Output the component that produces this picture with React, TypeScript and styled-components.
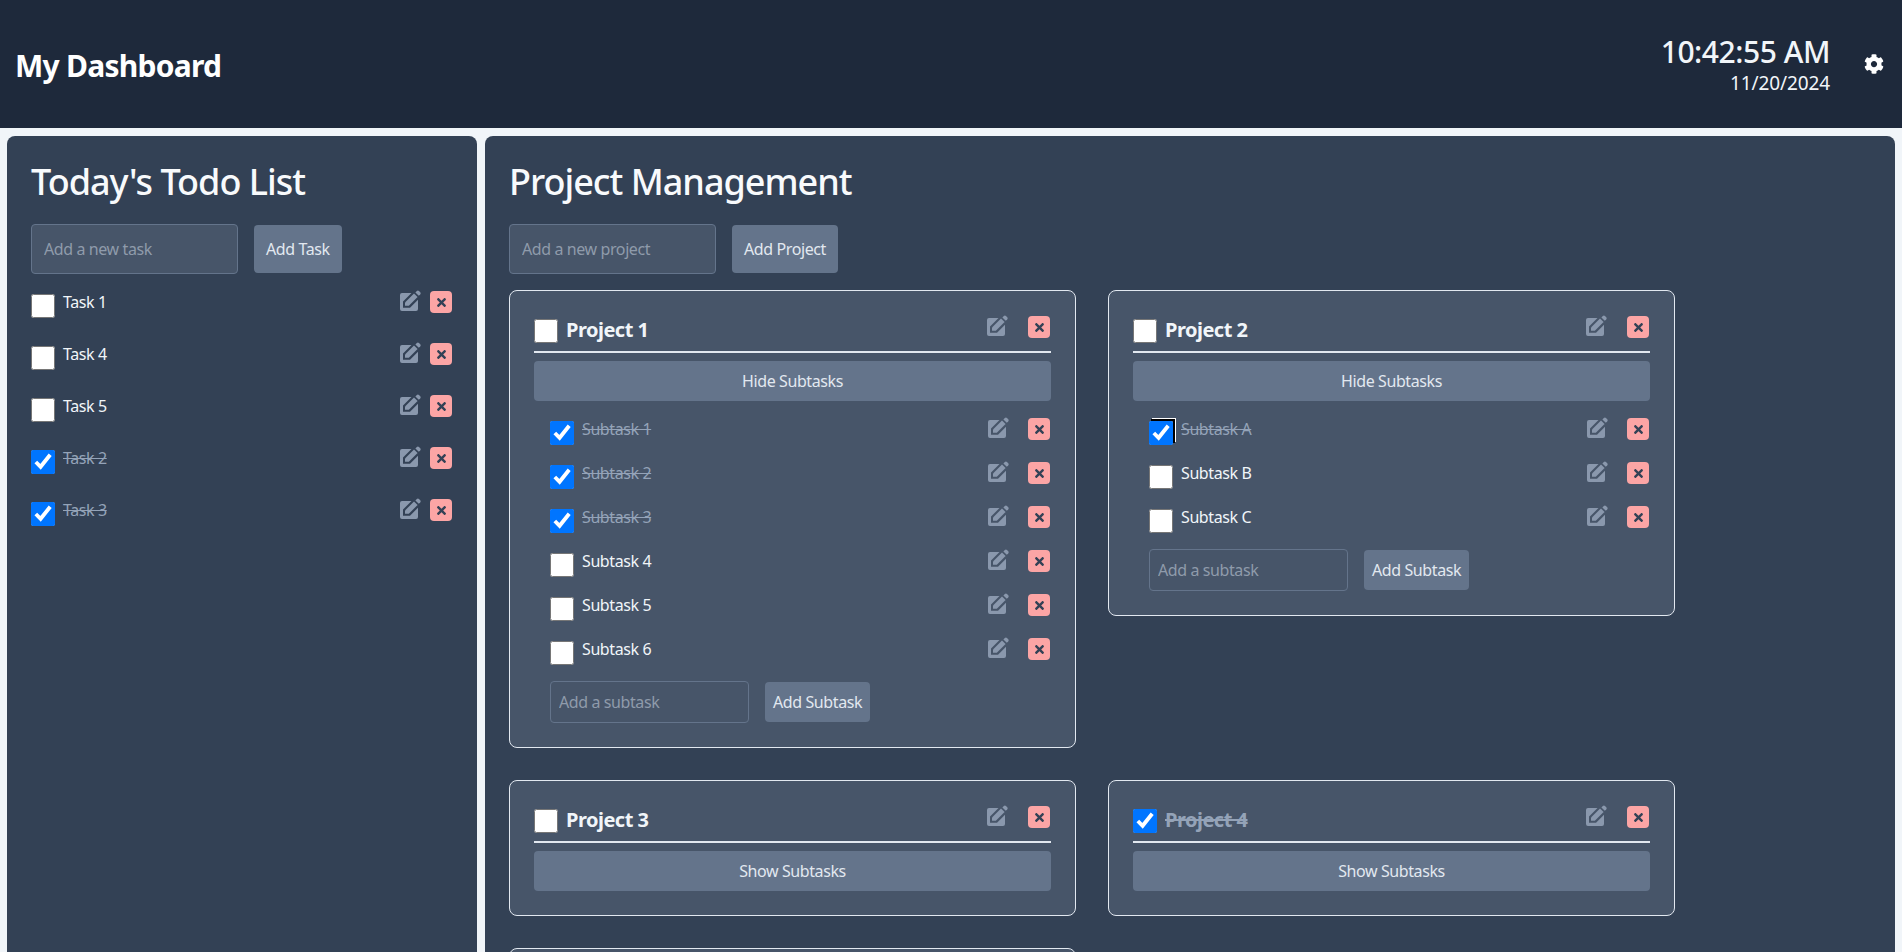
import { createGlobalStyle } from "styled-components";
import styled from "styled-components";
import { FaCog, FaTimes } from "react-icons/fa";

const GlobalStyle = createGlobalStyle`
  html, body {
    margin: 0;
    padding: 0;
    height: 100%;
    overflow: hidden;
    background: #f1f5f9;
    font-family: "Noto Sans", "Open Sans", sans-serif;
    color: #f1f5f9;
  }
  * { box-sizing: border-box; }
`;

const Header = styled.header`
  height: 128px;
  background: #1e293b;
  display: flex;
  align-items: center;
  justify-content: space-between;
  padding: 0 18px 0 15px;
`;

const Brand = styled.h1`
  margin: 2px 0 0;
  font-size: 30px;
  font-weight: 700;
  letter-spacing: -0.75px;
  color: #fff;
`;

const HeaderRight = styled.div`
  display: flex;
  align-items: center;
  gap: 34px;
`;

const Clock = styled.div`
  text-align: right;
  padding-top: 2px;
`;

const Time = styled.div`
  font-size: 30px;
  line-height: 36px;
  font-weight: 500;
  letter-spacing: -0.45px;
`;

const DateText = styled.div`
  font-size: 19px;
  line-height: 26px;
  letter-spacing: -0.1px;
`;

const Gear = styled(FaCog)`
  display: block;
  width: 20px;
  height: 20px;
  color: #fff;
`;

const Main = styled.main`
  display: grid;
  grid-template-columns: 470px 1fr;
  gap: 8px;
  padding: 8px 7px 0;
`;

const Panel = styled.section`
  background: #334155;
  border-radius: 8px;
  padding: 24px;
  min-height: 816px;
`;

const Title = styled.h2`
  margin: 0 0 22px;
  padding-top: 2px;
  font-size: 36px;
  line-height: 40px;
  font-weight: 500;
  letter-spacing: -1px;
  color: #f8fafc;
`;

const AddForm = styled.div`
  display: flex;
  align-items: center;
  gap: 16px;
  margin-bottom: 16px;
`;

const Input = styled.input<{ $sub?: boolean }>`
  width: ${(p) => (p.$sub ? "199px" : "207px")};
  height: ${(p) => (p.$sub ? "42px" : "50px")};
  padding: 0 ${(p) => (p.$sub ? "8px" : "12px")};
  background: #475569;
  border: 1px solid #64748b;
  border-radius: 4px;
  font: inherit;
  font-size: 16px;
  letter-spacing: -0.4px;
  color: #f1f5f9;

  &::placeholder {
    color: #8f9bab;
  }
`;

const Button = styled.button<{ $sub?: boolean }>`
  height: ${(p) => (p.$sub ? "40px" : "48px")};
  padding: 0 ${(p) => (p.$sub ? "8px" : "12px")};
  background: #64748b;
  border: 0;
  border-radius: 4px;
  font: inherit;
  font-size: 16px;
  letter-spacing: -0.4px;
  color: #e2e8f0;
`;

const Row = styled.div<{ $sub?: boolean }>`
  display: flex;
  align-items: flex-start;
  justify-content: space-between;
  height: ${(p) => (p.$sub ? "44px" : "52px")};
`;

const RowMain = styled.label`
  display: flex;
  align-items: flex-start;
  gap: 8px;
`;

const Check = styled.input.attrs({ type: "checkbox" })<{ $focused?: boolean }>`
  width: 24px;
  height: 24px;
  margin: 4px 0 0;
  accent-color: #0075ff;
  ${(p) => (p.$focused ? "box-shadow: 2px -2px 0 #000, 3px -3px 0 #fff;" : "")}
`;

const ItemText = styled.span<{ $done?: boolean }>`
  font-size: 16px;
  line-height: 24px;
  letter-spacing: -0.4px;
  color: ${(p) => (p.$done ? "#94a3b8" : "#f1f5f9")};
  text-decoration: ${(p) => (p.$done ? "line-through" : "none")};
`;

const Actions = styled.div<{ $gap: number }>`
  display: flex;
  align-items: flex-start;
  gap: ${(p) => p.$gap}px;
  padding-right: 1px;
`;

const EditSvg = styled.svg`
  display: block;
  width: 21px;
  height: 21px;
  color: #8a98ad;
`;

const DeleteButton = styled.button`
  width: 22px;
  height: 22px;
  margin-top: 1px;
  padding: 0;
  display: flex;
  align-items: center;
  justify-content: center;
  background: #fca5a5;
  border: 0;
  border-radius: 4px;
  color: #334155;
`;

const CardGrid = styled.div`
  display: grid;
  grid-template-columns: repeat(2, 567px);
  gap: 32px;
  align-items: start;
`;

const Card = styled.article`
  background: #475569;
  border: 1px solid #e2e8f0;
  border-radius: 8px;
  padding: 24px;
`;

const CardHeader = styled.div`
  display: flex;
  align-items: flex-start;
  justify-content: space-between;
  height: 38px;
  border-bottom: 2px solid #e2e8f0;
  margin-bottom: 8px;
`;

const ProjectName = styled.span<{ $done?: boolean }>`
  padding-top: 1px;
  font-size: 20px;
  line-height: 28px;
  font-weight: 700;
  letter-spacing: -0.5px;
  color: ${(p) => (p.$done ? "#94a3b8" : "#f1f5f9")};
  text-decoration: ${(p) => (p.$done ? "line-through" : "none")};
`;

const ToggleButton = styled.button`
  display: block;
  width: 100%;
  height: 40px;
  background: #64748b;
  border: 0;
  border-radius: 4px;
  font: inherit;
  font-size: 16px;
  letter-spacing: -0.4px;
  color: #e2e8f0;
`;

const SubtaskList = styled.div`
  margin-top: 16px;
  padding-left: 16px;
`;

const SubForm = styled(AddForm)`
  margin: 0;
`;

const todos = [
  { name: "Task 1", done: false },
  { name: "Task 4", done: false },
  { name: "Task 5", done: false },
  { name: "Task 2", done: true },
  { name: "Task 3", done: true },
];

const projects = [
  {
    name: "Project 1",
    done: false,
    subtasks: [
      { name: "Subtask 1", done: true },
      { name: "Subtask 2", done: true },
      { name: "Subtask 3", done: true },
      { name: "Subtask 4", done: false },
      { name: "Subtask 5", done: false },
      { name: "Subtask 6", done: false },
    ],
  },
  {
    name: "Project 2",
    done: false,
    subtasks: [
      { name: "Subtask A", done: true, focused: true },
      { name: "Subtask B", done: false },
      { name: "Subtask C", done: false },
    ],
  },
  { name: "Project 3", done: false },
  { name: "Project 4", done: true },
  { name: "Project 5", done: false },
];

// solid square with the pencil cut out of it
const EditIcon = () => (
  <EditSvg viewBox="0 0 21 21" fill="currentColor">
    <path d="M2 3H11.5L3 11.5V17.7H10L18 9.7V19A2 2 0 0 1 16 21H2A2 2 0 0 1 0 19V5A2 2 0 0 1 2 3Z" />
    <path d="M5 12.5L14 3.5L17.6 7L8.8 15.7H5Z" />
    <path d="M15.4 2.4L16.8 1Q17.9 0 19 1L20.2 2.2Q21.2 3.3 20.2 4.4L18.8 5.8Z" />
  </EditSvg>
);

const RowActions = ({ gap }: { gap: number }) => (
  <Actions $gap={gap}>
    <EditIcon />
    <DeleteButton>
      <FaTimes size={13} />
    </DeleteButton>
  </Actions>
);

export default function App() {
  return (
    <>
      <GlobalStyle />
      <Header>
        <Brand>My Dashboard</Brand>
        <HeaderRight>
          <Clock>
            <Time>10:42:55 AM</Time>
            <DateText>11/20/2024</DateText>
          </Clock>
          <Gear />
        </HeaderRight>
      </Header>
      <Main>
        <Panel>
          <Title>Today's Todo List</Title>
          <AddForm>
            <Input placeholder="Add a new task" />
            <Button>Add Task</Button>
          </AddForm>
          {todos.map((todo) => (
            <Row key={todo.name}>
              <RowMain>
                <Check defaultChecked={todo.done} />
                <ItemText $done={todo.done}>{todo.name}</ItemText>
              </RowMain>
              <RowActions gap={9} />
            </Row>
          ))}
        </Panel>
        <Panel>
          <Title>Project Management</Title>
          <AddForm>
            <Input placeholder="Add a new project" />
            <Button>Add Project</Button>
          </AddForm>
          <CardGrid>
            {projects.map((project) => (
              <Card key={project.name}>
                <CardHeader>
                  <RowMain>
                    <Check defaultChecked={project.done} />
                    <ProjectName $done={project.done}>{project.name}</ProjectName>
                  </RowMain>
                  <RowActions gap={20} />
                </CardHeader>
                <ToggleButton>{project.subtasks ? "Hide Subtasks" : "Show Subtasks"}</ToggleButton>
                {project.subtasks && (
                  <SubtaskList>
                    {project.subtasks.map((sub) => (
                      <Row $sub key={sub.name}>
                        <RowMain>
                          <Check defaultChecked={sub.done} $focused={"focused" in sub} />
                          <ItemText $done={sub.done}>{sub.name}</ItemText>
                        </RowMain>
                        <RowActions gap={19} />
                      </Row>
                    ))}
                    <SubForm>
                      <Input $sub placeholder="Add a subtask" />
                      <Button $sub>Add Subtask</Button>
                    </SubForm>
                  </SubtaskList>
                )}
              </Card>
            ))}
          </CardGrid>
        </Panel>
      </Main>
    </>
  );
}
